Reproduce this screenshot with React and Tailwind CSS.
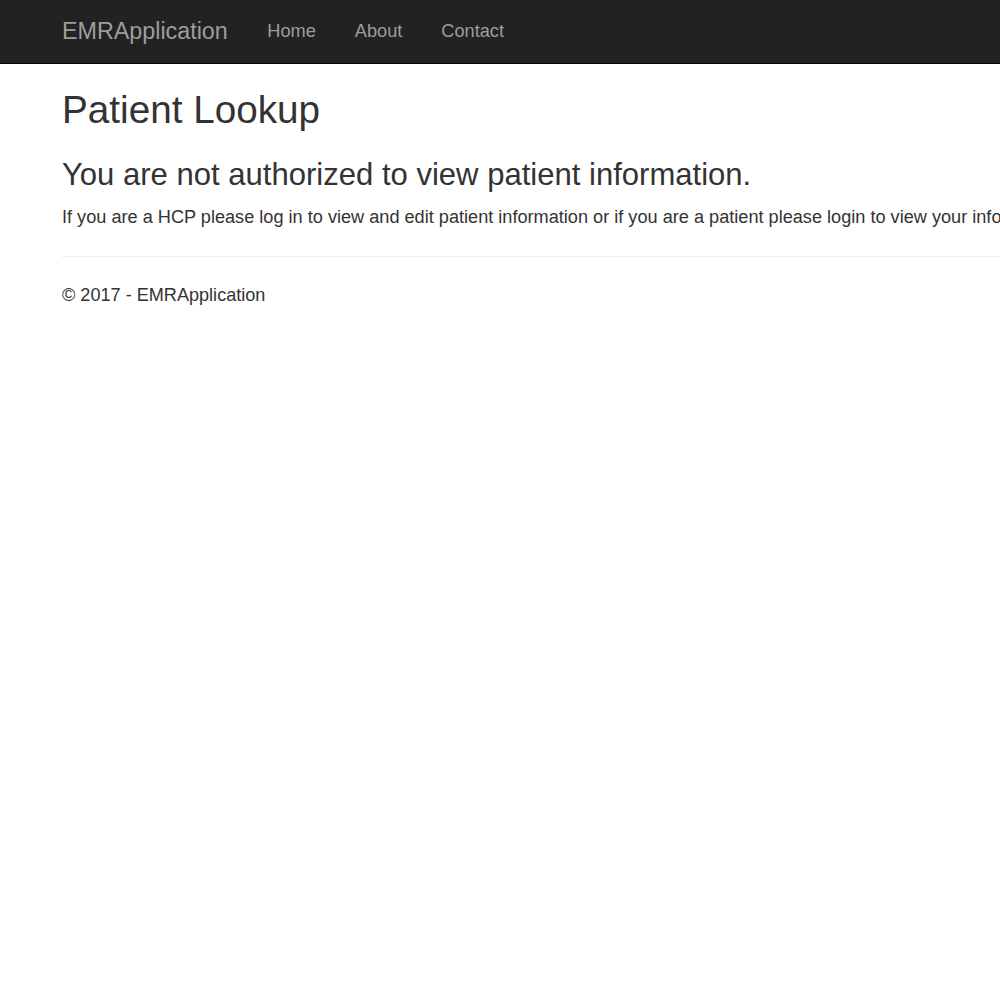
export default function App() {
    return (
        <div className="min-h-[1000px] w-[1000px] overflow-hidden bg-white text-[#333] font-['Liberation_Sans',Arial,sans-serif]">

            <nav className="h-[64px] bg-[#222] border-b border-[#080808] px-[62px] pb-[2px] flex items-center">
                <span className="text-[23.3px] leading-[30px] text-[#9d9d9d] pr-[20px]">EMRApplication</span>
                <ul className="flex text-[18.2px] leading-[26px] text-[#9d9d9d]">
                    <li className="px-[19.5px]">Home</li>
                    <li className="px-[19.5px]">About</li>
                    <li className="px-[19.5px]">Contact</li>
                </ul>
            </nav>

            <div className="px-[62px] whitespace-nowrap">
                <h2 className="mt-[25px] text-[38.7px] leading-[42px]">Patient Lookup</h2>
                <h3 className="mt-[27px] text-[31.05px] leading-[34px]">You are not authorized to view patient information.</h3>
                <p className="mt-[12px] text-[18.15px] leading-[26px]">
                    If you are a HCP please log in to view and edit patient information or if you are a patient please login to view your information.
                </p>
                <hr className="mt-[26px] mr-[-62px] border-t border-[#eee]" />
                <footer>
                    <p className="mt-[25px] text-[18.1px] leading-[26px]">© 2017 - EMRApplication</p>
                </footer>
            </div>
        </div>
    )
}
